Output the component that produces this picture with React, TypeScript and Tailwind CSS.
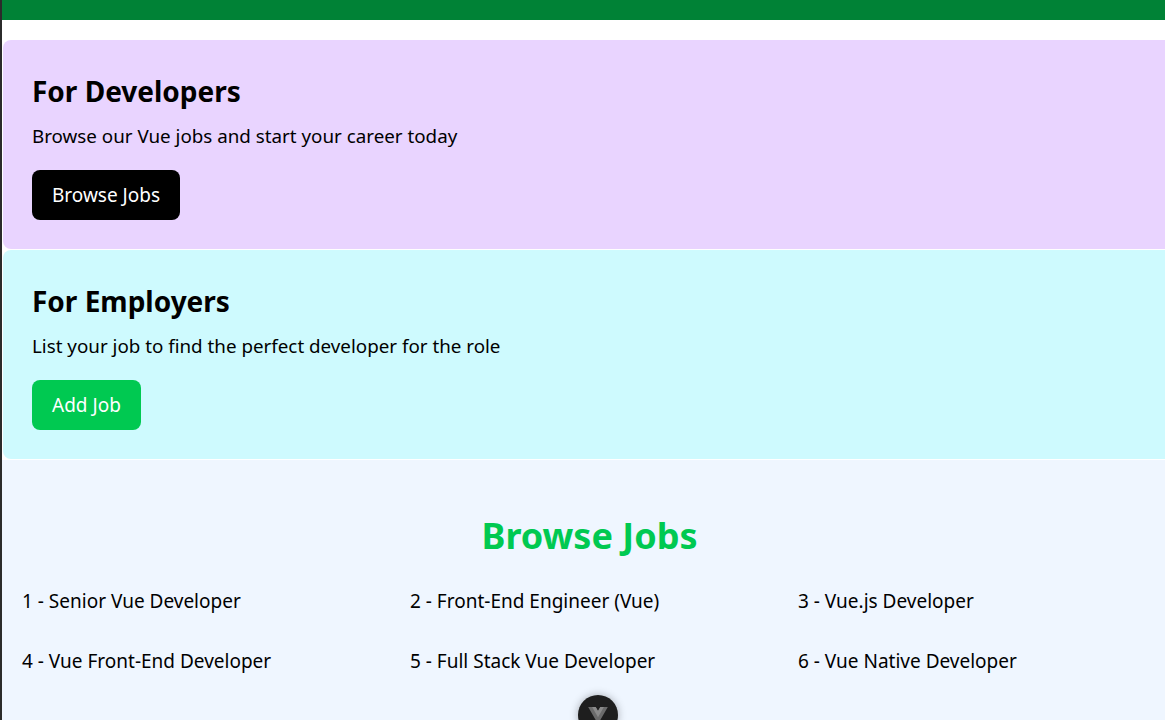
import React from "react";

const jobs = [
  "1 - Senior Vue Developer",
  "2 - Front-End Engineer (Vue)",
  "3 - Vue.js Developer",
  "4 - Vue Front-End Developer",
  "5 - Full Stack Vue Developer",
  "6 - Vue Native Developer",
];

export default function App() {
  return (
    <div
      className="relative flex h-[720px] w-[1165px] overflow-hidden bg-white"
      style={{ fontFamily: '"Noto Sans", "Open Sans", sans-serif' }}
    >
      <div className="w-[2px] shrink-0 bg-[#2b2b2b]" />
      <div className="flex w-[1180px] shrink-0 flex-col">
        <div className="h-[20px] bg-[#008236]" />
        <div className="h-[20px] bg-white" />
        <div className="flex flex-col pl-[1px]">
          <div className="rounded-lg bg-[#e9d4ff] px-[29px] pb-[29px] pt-[33px] text-black">
            <h2 className="text-[28px] font-bold leading-[36px]">For Developers</h2>
            <p className="mb-[20px] mt-[13px] text-[18.8px] leading-[28px]">Browse our Vue jobs and start your career today</p>
            <button className="h-[50px] rounded-lg bg-black px-5 text-[19px] text-white">Browse Jobs</button>
          </div>
          <div className="mt-[1px] rounded-lg bg-[#cefafe] px-[29px] pb-[29px] pt-[33px] text-black">
            <h2 className="text-[28px] font-bold leading-[36px]">For Employers</h2>
            <p className="mb-[20px] mt-[13px] text-[18.8px] leading-[28px]">List your job to find the perfect developer for the role</p>
            <button className="h-[50px] rounded-lg bg-[#00c951] px-5 text-[19px] text-white">Add Job</button>
          </div>
        </div>
        <div className="mt-[1px] flex-1 bg-[#eff6ff] pt-[56px]">
          <h2 className="w-[1175px] text-center text-4xl font-bold text-[#00c951]">Browse Jobs</h2>
          <div className="mt-[31px] grid grid-cols-[388px_388px_388px] gap-y-[32px] pl-[20px] text-[19px] leading-[28px] text-black">
            {jobs.map((j) => (
              <div key={j} className="h-[28px]">{j}</div>
            ))}
          </div>
        </div>
      </div>
      <div className="absolute left-[578px] top-[695px] flex h-[40px] w-[40px] items-start justify-center rounded-full bg-[#1e1e1e] pt-[12px] shadow-[0_0_8px_rgba(0,0,0,0.3)]">
        <svg width="20" height="17" viewBox="0 0 261.76 226.69">
          <path d="M161.096.001l-30.225 52.351L100.647.001H-.005l130.877 226.688L261.749.001z" fill="#6b6b6b" />
          <path d="M161.096.001l-30.225 52.351L100.647.001H52.346l78.526 136.01L209.398.001z" fill="#8a8a8a" />
        </svg>
      </div>
    </div>
  );
}
